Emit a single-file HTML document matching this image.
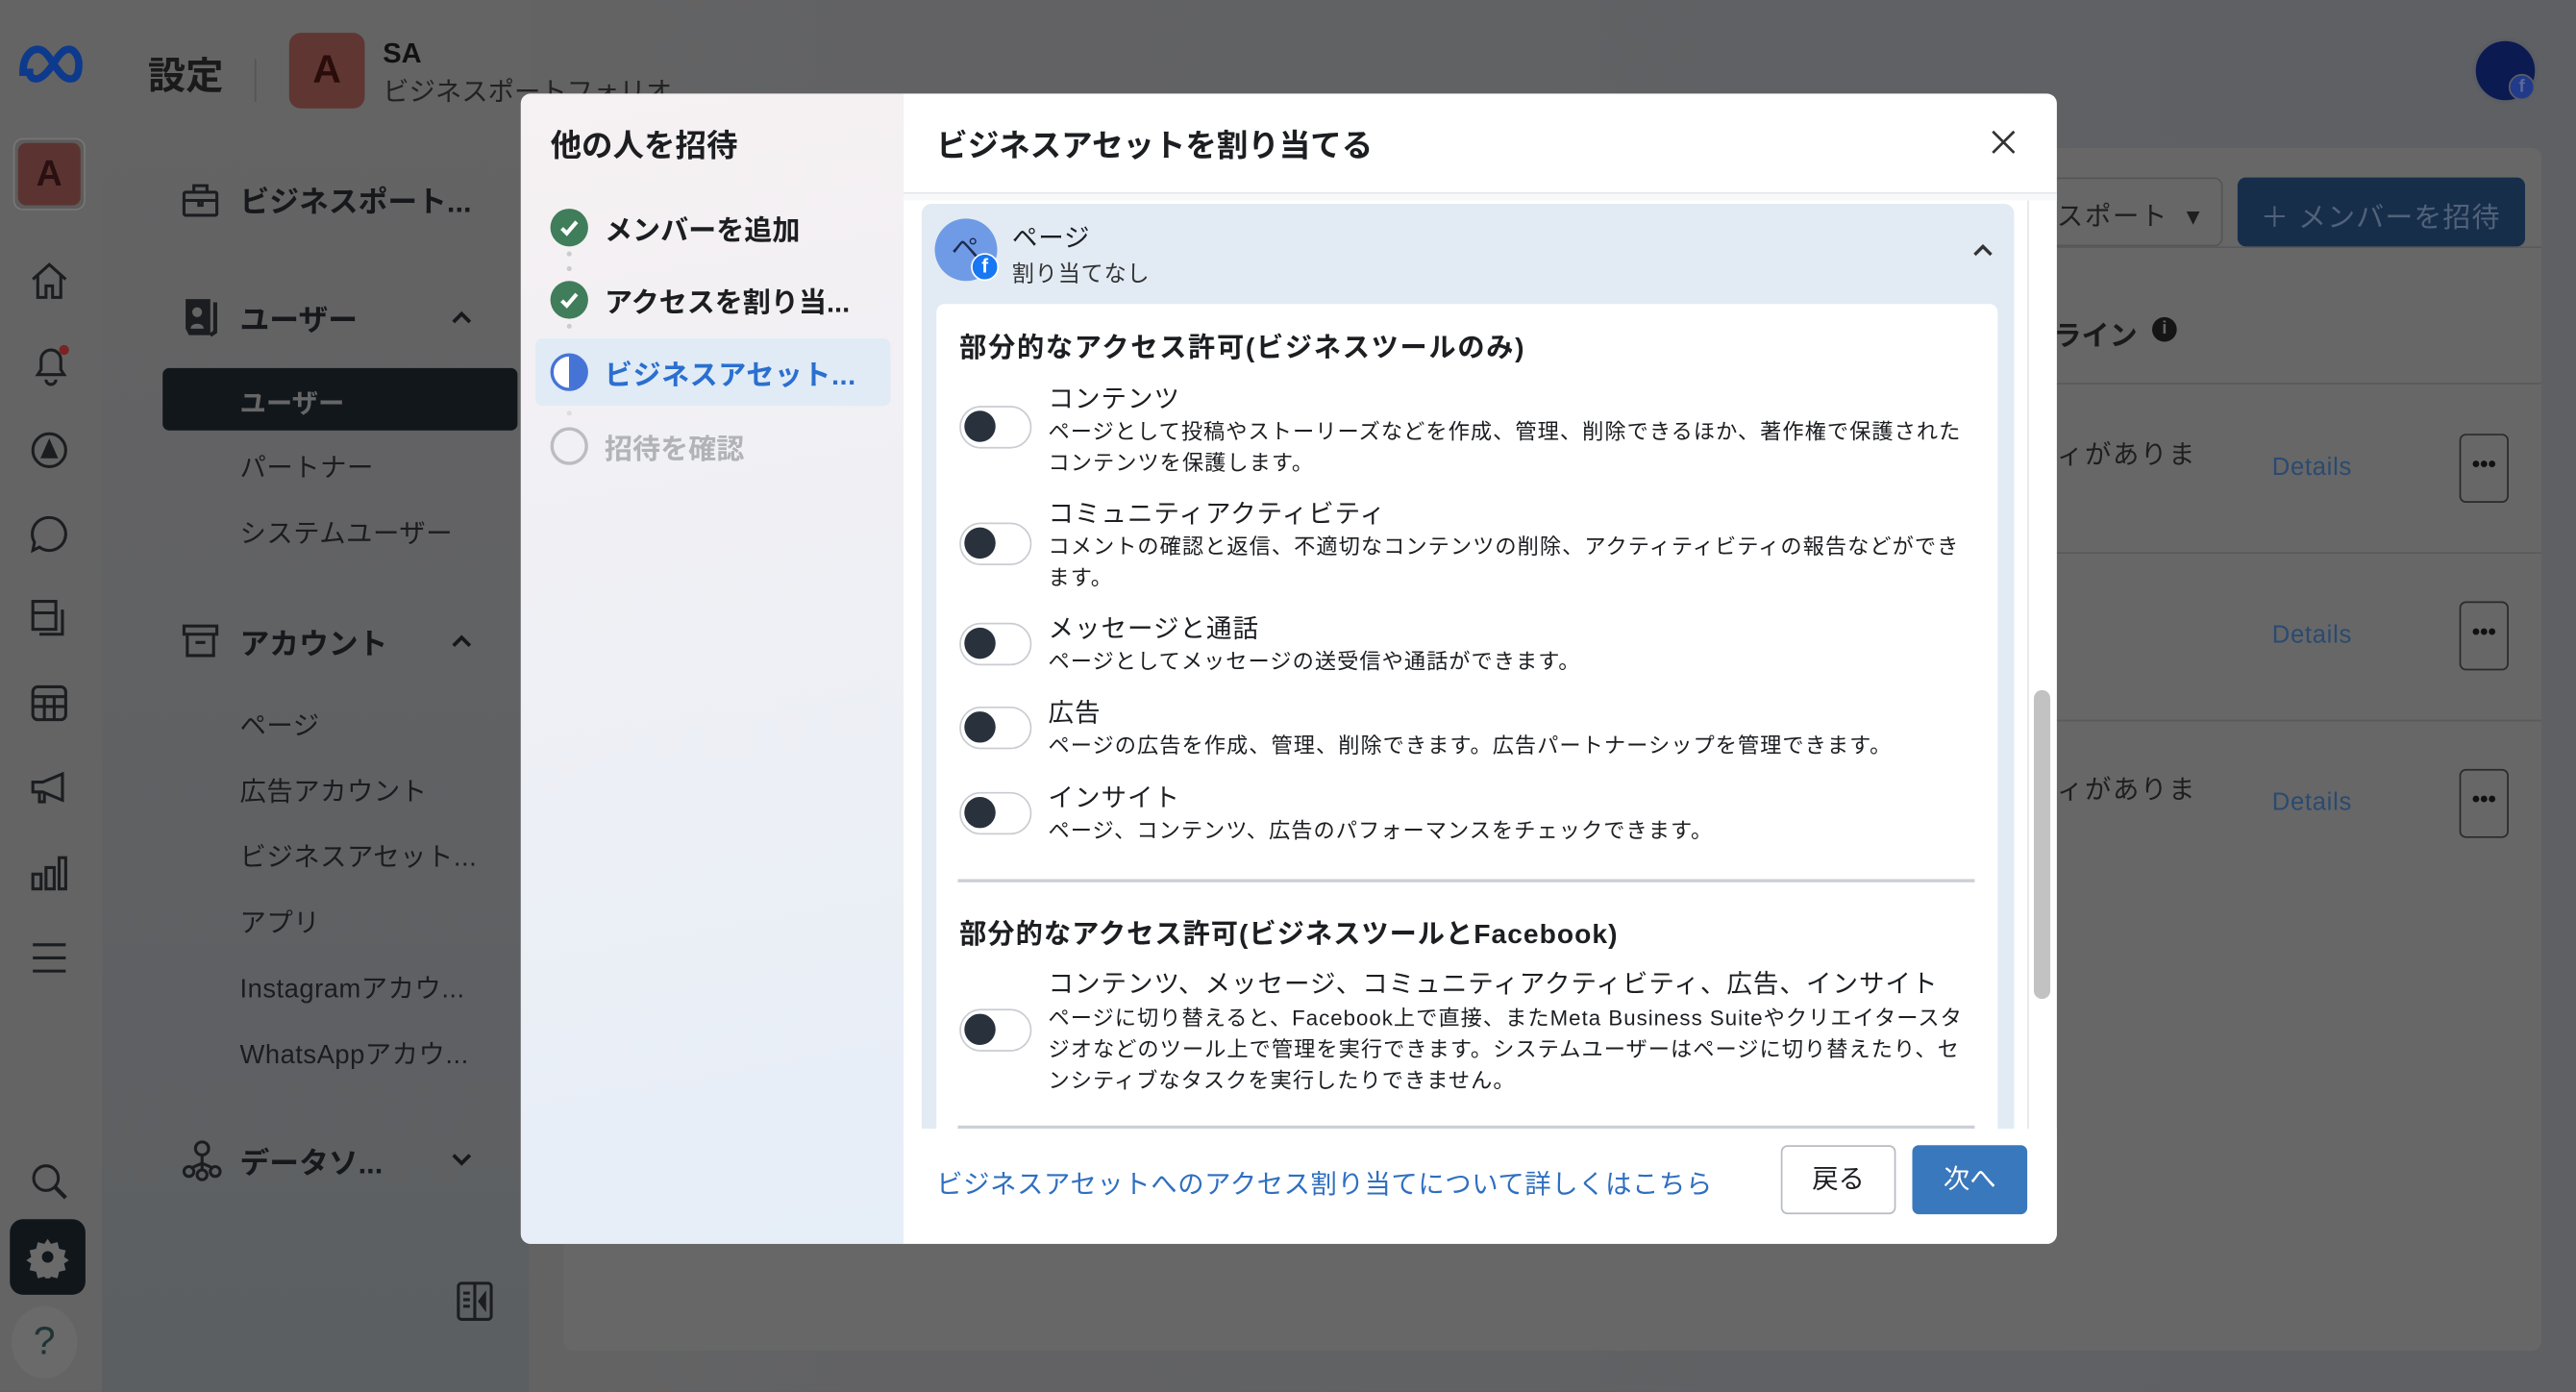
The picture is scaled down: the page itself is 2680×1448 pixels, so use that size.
<!DOCTYPE html>
<html><head><meta charset="utf-8"><style>
*{box-sizing:border-box;margin:0;padding:0}
html,body{width:2680px;height:1448px;overflow:hidden;background:#5d5f62}
#w{position:absolute;left:0;top:0;width:1568px;height:847px;transform:scale(1.70918);transform-origin:0 0;font-family:"Liberation Sans","Noto Sans CJK JP",sans-serif;color:#1c1e21}
.a{position:absolute}
.rail{left:0;top:0;width:62px;height:847px;background:#646464}
.nav{left:62px;top:0;width:260px;height:847px;background:linear-gradient(#656465,#5c5f62)}
.main{left:322px;top:0;width:1246px;height:847px;background:linear-gradient(90deg,#636364,#5e6064)}
.t{position:absolute;white-space:nowrap}
.ico{position:absolute;stroke:#1b1d20;fill:none;stroke-width:1.8}
.navt{font-size:16px;color:#1a1c1f;letter-spacing:0.3px}
.navb{font-size:18px;font-weight:bold;color:#16181b}
.modal{left:317px;top:57px;width:935px;height:700px;border-radius:6px;overflow:hidden;background:#fff}
.lp{left:0;top:0;width:233px;height:700px;background:linear-gradient(170deg,#f6f1f2,#e6eef8)}
.step{font-size:17px;font-weight:bold;color:#1c1e21}
.tog{position:absolute;left:584px;width:44px;height:26px;border:1.5px solid #c9ccd1;border-radius:13px;background:#fff}
.tog:after{content:"";position:absolute;left:2px;top:2px;width:19px;height:19px;border-radius:50%;background:#28313c}
.tt{font-size:15.5px;color:#1c1e21;letter-spacing:0.6px}
.td{font-size:13px;letter-spacing:0.6px;color:#1c1e21;line-height:19px;white-space:normal;width:558px}
.gcard{background:#676767}
.det{font-size:15px;color:#2a4a70}
.dots{position:absolute;left:1497px;width:30px;height:42px;border:1.5px solid #2a2a2a;border-radius:4px;font-size:14px;font-weight:bold;text-align:center;line-height:34px;color:#111}
</style></head><body><div id="w">
<div class="a rail"></div>
<div class="a nav"></div>
<div class="a main"></div>
<svg class="a" style="left:10px;top:26px" width="42" height="26" viewBox="0 0 42 26"><path d="M4 18C4 8 9 4 13 4c5 0 8 7 11 11s5 7 9 7 5-4 5-9-3-9-6-9c-5 0-8 7-11 11s-6 7-9 7-4-2-4-4z" fill="none" stroke="#0d3a8c" stroke-width="4.5"/></svg>
<div class="a" style="left:8px;top:84px;width:44px;height:44px;border-radius:6px;background:#5e5b5b;border:1px solid #777"></div>
<div class="a" style="left:11px;top:87px;width:38px;height:38px;border-radius:5px;background:#5b3432;color:#2a1010;font-weight:bold;font-size:22px;text-align:center;line-height:38px">A</div>
<svg class="ico" style="left:17px;top:158px" width="26" height="26" viewBox="0 0 26 26"><path d="M3 12L13 3l10 9M6 10v13h5v-7h4v7h5V10"/></svg>
<svg class="ico" style="left:17px;top:208px" width="28" height="28" viewBox="0 0 28 28"><path d="M6 20h16l-2-3v-6a6 6 0 0 0-12 0v6zM11 23a3 3 0 0 0 6 0"/><circle cx="22" cy="5" r="3" fill="#7a2323" stroke="none"/></svg>
<svg class="ico" style="left:17px;top:261px" width="26" height="26" viewBox="0 0 26 26"><circle cx="13" cy="13" r="10"/><path d="M9 17l4-9 4 9z" fill="#1b1d20"/></svg>
<svg class="ico" style="left:17px;top:312px" width="26" height="26" viewBox="0 0 26 26"><path d="M13 3a10 10 0 1 1-6 18l-4 2 1-5A10 10 0 0 1 13 3z"/></svg>
<svg class="ico" style="left:17px;top:363px" width="26" height="26" viewBox="0 0 26 26"><rect x="3" y="3" width="14" height="17"/><path d="M7 23h14V8M3 10h14"/></svg>
<svg class="ico" style="left:17px;top:415px" width="26" height="26" viewBox="0 0 26 26"><rect x="3" y="3" width="20" height="20" rx="3"/><path d="M3 9h20M3 15h20M10 9v14M16 9v14"/></svg>
<svg class="ico" style="left:17px;top:467px" width="26" height="26" viewBox="0 0 26 26"><path d="M3 9h6l12-5v16L9 15H3zM7 15v6h3v-6"/></svg>
<svg class="ico" style="left:17px;top:518px" width="26" height="26" viewBox="0 0 26 26"><rect x="3" y="14" width="5" height="9"/><rect x="11" y="10" width="5" height="13"/><rect x="19" y="4" width="4" height="19"/></svg>
<svg class="ico" style="left:17px;top:570px" width="26" height="26" viewBox="0 0 26 26"><path d="M3 5h20M3 13h20M3 21h20"/></svg>
<svg class="ico" style="left:17px;top:706px" width="26" height="26" viewBox="0 0 26 26"><circle cx="11" cy="11" r="7.5"/><path d="M16.5 16.5L23 23" stroke-width="2.4"/></svg>
<div class="a" style="left:6px;top:742px;width:46px;height:46px;border-radius:8px;background:#11161b"></div>
<svg class="a" style="left:16px;top:752px" width="26" height="26" viewBox="0 0 26 26"><path d="M13 2l2 3 4-1 1 4 4 1-1 4 3 2-3 2 1 4-4 1-1 4-4-1-2 3-2-3-4 1-1-4-4-1 1-4-3-2 3-2-1-4 4-1 1-4 4 1z" fill="#6a6a6a"/><circle cx="13" cy="13" r="3.5" fill="#11161b"/></svg>
<div class="a" style="left:7px;top:795px;width:40px;height:44px;border-radius:50%;background:#6a6a6a;text-align:center;font-size:24px;line-height:44px;color:#1f3334">?</div>
<div class="t" style="left:90px;top:27px;font-size:23px;font-weight:bold;color:#1a1a1a">設定</div>
<div class="a" style="left:155px;top:36px;width:1px;height:26px;background:#555"></div>
<div class="a" style="left:176px;top:20px;width:46px;height:46px;border-radius:7px;background:#5f3632;color:#2a0d0b;font-weight:bold;font-size:24px;text-align:center;line-height:46px">A</div>
<div class="t" style="left:233px;top:23px;font-size:17px;font-weight:bold;color:#111">SA</div>
<div class="t" style="left:233px;top:42px;font-size:16px;color:#222">ビジネスポートフォリオ</div>
<div class="a" style="left:1505px;top:23px;width:40px;height:40px;border-radius:50%;background:#0c1a52;border:2px solid #5a5d62"></div>
<div class="a" style="left:1527px;top:45px;width:16px;height:16px;border-radius:50%;background:#213a8a;border:1.5px solid #5a5d62;color:#5a6a9a;font-size:11px;font-weight:bold;text-align:center;line-height:14px">f</div>
<svg class="ico" style="left:110px;top:110px" width="24" height="24" viewBox="0 0 24 24"><rect x="2" y="7" width="20" height="14" rx="1"/><path d="M8 7V3h8v4M2 12h20M11 12v3h2v-3"/></svg>
<div class="t navb" style="left:146px;top:109px">ビジネスポート...</div>
<svg class="a" style="left:110px;top:180px" width="26" height="26" viewBox="0 0 26 26"><path d="M3 2h15v22H5L3 20z" fill="#1b1d20"/><circle cx="10" cy="10" r="3" fill="#646464"/><path d="M6 20c0-4 8-4 8 0" fill="#646464"/><path d="M21 4v18l-3 2" stroke="#1b1d20" stroke-width="2.4" fill="none"/></svg>
<div class="t navb" style="left:146px;top:181px">ユーザー</div>
<svg class="a" style="left:274px;top:188px" width="14" height="10" viewBox="0 0 14 10"><path d="M2 8l5-5 5 5" stroke="#16181b" stroke-width="2.2" fill="none"/></svg>
<div class="a" style="left:99px;top:224px;width:216px;height:38px;border-radius:4px;background:#12171c"></div>
<div class="t" style="left:146px;top:232px;font-size:16px;font-weight:bold;color:#666">ユーザー</div>
<div class="t navt" style="left:146px;top:271px">パートナー</div>
<div class="t navt" style="left:146px;top:311px">システムユーザー</div>
<svg class="ico" style="left:110px;top:378px" width="24" height="24" viewBox="0 0 24 24"><rect x="2" y="3" width="20" height="5"/><path d="M4 8v13h16V8M9 13h6"/></svg>
<div class="t navb" style="left:146px;top:378px">アカウント</div>
<svg class="a" style="left:274px;top:385px" width="14" height="10" viewBox="0 0 14 10"><path d="M2 8l5-5 5 5" stroke="#16181b" stroke-width="2.2" fill="none"/></svg>
<div class="t navt" style="left:146px;top:428px">ページ</div>
<div class="t navt" style="left:146px;top:468px">広告アカウント</div>
<div class="t navt" style="left:146px;top:508px">ビジネスアセット...</div>
<div class="t navt" style="left:146px;top:548px">アプリ</div>
<div class="t navt" style="left:146px;top:588px">Instagramアカウ...</div>
<div class="t navt" style="left:146px;top:628px">WhatsAppアカウ...</div>
<svg class="ico" style="left:110px;top:693px" width="26" height="26" viewBox="0 0 26 26"><circle cx="13" cy="6" r="4"/><circle cx="5" cy="20" r="3"/><circle cx="13" cy="22" r="3"/><circle cx="21" cy="20" r="3"/><path d="M13 10v9M13 15l-7 3M13 15l7 3"/></svg>
<div class="t navb" style="left:146px;top:694px">データソ...</div>
<svg class="a" style="left:274px;top:701px" width="14" height="10" viewBox="0 0 14 10"><path d="M2 2l5 5 5-5" stroke="#16181b" stroke-width="2.2" fill="none"/></svg>
<svg class="ico" style="left:277px;top:779px" width="24" height="26" viewBox="0 0 24 26"><rect x="2" y="2" width="20" height="22" rx="2"/><path d="M12 2v22M5 8h4M5 12h4M5 16h4"/><path d="M18 9l-3 4 3 4z" fill="#1b1d20"/></svg>
<div class="a gcard" style="left:343px;top:90px;width:1204px;height:732px;border-radius:6px"></div>
<div class="a" style="left:343px;top:150px;width:1204px;height:1px;background:#5a5a5a"></div>
<div class="a" style="left:343px;top:233px;width:1204px;height:1px;background:#5a5a5a"></div>
<div class="a" style="left:343px;top:336px;width:1204px;height:1px;background:#5a5a5a"></div>
<div class="a" style="left:343px;top:438px;width:1204px;height:1px;background:#5a5a5a"></div>
<div class="a" style="left:1200px;top:108px;width:153px;height:42px;border:1.5px solid #555;border-radius:5px"></div>
<div class="t" style="left:1252px;top:118px;font-size:16px;color:#1e1e1e;letter-spacing:1px">スポート &nbsp;▾</div>
<div class="a" style="left:1362px;top:108px;width:175px;height:42px;border-radius:5px;background:#172e4b"></div>
<div class="t" style="left:1376px;top:118px;font-size:17px;color:#51627a;letter-spacing:0.6px">＋ メンバーを招待</div>
<div class="t" style="left:1250px;top:190px;font-size:17px;font-weight:bold;color:#1a1a1a">ライン</div>
<div class="a" style="left:1310px;top:193px;width:15px;height:15px;border-radius:50%;background:#151515;color:#666;font-size:11px;font-weight:bold;text-align:center;line-height:15px">i</div>
<div class="t" style="left:1252px;top:263px;font-size:16px;color:#1e1e1e;letter-spacing:1px">ィがありま</div>
<div class="t" style="left:1252px;top:467px;font-size:16px;color:#1e1e1e;letter-spacing:1px">ィがありま</div>
<div class="t det" style="left:1383px;top:276px;letter-spacing:0.4px">Details</div>
<div class="t det" style="left:1383px;top:378px;letter-spacing:0.4px">Details</div>
<div class="t det" style="left:1383px;top:480px;letter-spacing:0.4px">Details</div>
<div class="dots" style="top:264px">•••</div>
<div class="dots" style="top:366px">•••</div>
<div class="dots" style="top:468px">•••</div>
<div class="a modal">
 <div class="a lp"></div>
 <div class="t" style="left:18px;top:17px;font-size:19px;font-weight:bold;color:#1c1e21">他の人を招待</div>
 <div class="a" style="left:18px;top:70px;width:23px;height:23px;border-radius:50%;background:#3f7d5b"></div>
 <svg class="a" style="left:18px;top:70px" width="23" height="23" viewBox="0 0 23 23"><path d="M7 12l3 3 6-7" stroke="#fff" stroke-width="2.4" fill="none"/></svg>
 <div class="t step" style="left:51px;top:69px">メンバーを追加</div>
 <div class="a" style="left:28px;top:96px;width:3px;height:3px;border-radius:50%;background:#ccc"></div>
 <div class="a" style="left:28px;top:105px;width:3px;height:3px;border-radius:50%;background:#ccc"></div>
 <div class="a" style="left:18px;top:114px;width:23px;height:23px;border-radius:50%;background:#3f7d5b"></div>
 <svg class="a" style="left:18px;top:114px" width="23" height="23" viewBox="0 0 23 23"><path d="M7 12l3 3 6-7" stroke="#fff" stroke-width="2.4" fill="none"/></svg>
 <div class="t step" style="left:51px;top:113px">アクセスを割り当...</div>
 <div class="a" style="left:28px;top:140px;width:3px;height:3px;border-radius:50%;background:#ccc"></div>
 <div class="a" style="left:9px;top:149px;width:216px;height:41px;border-radius:4px;background:#e0ebf6"></div>
 <div class="a" style="left:18px;top:158px;width:23px;height:23px;border-radius:50%;border:2px solid #4674d6;background:linear-gradient(90deg,#fff 50%,#4674d6 50%)"></div>
 <div class="t step" style="left:51px;top:157px;color:#2b6fcf;letter-spacing:0.3px">ビジネスアセット...</div>
 <div class="a" style="left:28px;top:193px;width:3px;height:3px;border-radius:50%;background:#ddd"></div>
 <div class="a" style="left:18px;top:203px;width:23px;height:23px;border-radius:50%;border:2px solid #bcbdc0"></div>
 <div class="t step" style="left:51px;top:202px;color:#b1b3b7">招待を確認</div>
 <div class="t" style="left:253px;top:17px;font-size:19px;font-weight:bold">ビジネスアセットを割り当てる</div>
 <svg class="a" style="left:894px;top:21px" width="17" height="17" viewBox="0 0 17 17"><path d="M2 2l13 13M15 2L2 15" stroke="#333" stroke-width="1.6"/></svg>
 <div class="a" style="left:233px;top:60px;width:702px;height:1px;background:#e4e6ea"></div>
 <div class="a" style="left:233px;top:61px;width:702px;height:4px;background:#f7f8fa"></div>
 <div class="a" style="left:917px;top:65px;width:1px;height:565px;background:#e6e6e6"></div>
 <div class="a" style="left:921px;top:363px;width:10px;height:188px;border-radius:5px;background:#c2c2c2"></div>
 <div class="a" style="left:244px;top:67px;width:665px;height:570px;border-radius:6px;background:#e2ebf4"></div>
 <div class="a" style="left:252px;top:76px;width:38px;height:38px;border-radius:50%;background:#6f9be6"></div>
 <div class="t" style="left:262px;top:80px;font-size:17px;color:#1c2b50">ペ</div>
 <div class="a" style="left:274px;top:97px;width:17px;height:17px;border-radius:50%;background:#1877f2;border:1.5px solid #fff;color:#fff;font-size:12px;font-weight:bold;text-align:center;line-height:15px">f</div>
 <div class="t" style="left:299px;top:76px;font-size:15.5px;color:#1c1e21;letter-spacing:0.5px">ページ</div>
 <div class="t" style="left:299px;top:98px;font-size:13.5px;color:#333;letter-spacing:0.5px">割り当てなし</div>
 <svg class="a" style="left:883px;top:90px" width="14" height="10" viewBox="0 0 14 10"><path d="M2 8l5-5 5 5" stroke="#333" stroke-width="2" fill="none"/></svg>
 <div class="a" style="left:253px;top:128px;width:646px;height:520px;border-radius:5px;background:#fff"></div>
 <div class="t" style="left:267px;top:141px;font-size:16.5px;font-weight:bold;letter-spacing:1px">部分的なアクセス許可(ビジネスツールのみ)</div>
 <div class="tog" style="left:267px;top:190px"></div>
 <div class="t tt" style="left:321px;top:174px">コンテンツ</div>
 <div class="t td" style="left:321px;top:196px">ページとして投稿やストーリーズなどを作成、管理、削除できるほか、著作権で保護されたコンテンツを保護します。</div>
 <div class="tog" style="left:267px;top:261px"></div>
 <div class="t tt" style="left:321px;top:244px">コミュニティアクティビティ</div>
 <div class="t td" style="left:321px;top:266px">コメントの確認と返信、不適切なコンテンツの削除、アクティティビティの報告などができます。</div>
 <div class="tog" style="left:267px;top:322px"></div>
 <div class="t tt" style="left:321px;top:314px">メッセージと通話</div>
 <div class="t td" style="left:321px;top:336px">ページとしてメッセージの送受信や通話ができます。</div>
 <div class="tog" style="left:267px;top:373px"></div>
 <div class="t tt" style="left:321px;top:365px">広告</div>
 <div class="t td" style="left:321px;top:387px">ページの広告を作成、管理、削除できます。広告パートナーシップを管理できます。</div>
 <div class="tog" style="left:267px;top:425px"></div>
 <div class="t tt" style="left:321px;top:417px">インサイト</div>
 <div class="t td" style="left:321px;top:439px">ページ、コンテンツ、広告のパフォーマンスをチェックできます。</div>
 <div class="a" style="left:266px;top:478px;width:619px;height:1.5px;background:#ccd0d5"></div>
 <div class="t" style="left:267px;top:498px;font-size:16.5px;font-weight:bold;letter-spacing:0.6px">部分的なアクセス許可(ビジネスツールとFacebook)</div>
 <div class="tog" style="left:267px;top:557px"></div>
 <div class="t tt" style="left:321px;top:530px">コンテンツ、メッセージ、コミュニティアクティビティ、広告、インサイト</div>
 <div class="t td" style="left:321px;top:553px">ページに切り替えると、Facebook上で直接、またMeta Business Suiteやクリエイタースタジオなどのツール上で管理を実行できます。システムユーザーはページに切り替えたり、センシティブなタスクを実行したりできません。</div>
 <div class="a" style="left:266px;top:628px;width:619px;height:1.5px;background:#ccd0d5"></div>
 <div class="a" style="left:233px;top:630px;width:702px;height:70px;background:#fff"></div>
 <div class="t" style="left:253px;top:650px;font-size:16px;color:#2f6fc0;letter-spacing:0.35px">ビジネスアセットへのアクセス割り当てについて詳しくはこちら</div>
 <div class="a" style="left:767px;top:640px;width:70px;height:42px;border:1.5px solid #b8bcc2;border-radius:4px;font-size:16px;text-align:center;line-height:41px;color:#1c1e21">戻る</div>
 <div class="a" style="left:847px;top:640px;width:70px;height:42px;border-radius:4px;background:#3a78bd;font-size:16px;text-align:center;line-height:44px;color:#fff">次へ</div>
</div>
</div></body></html>
